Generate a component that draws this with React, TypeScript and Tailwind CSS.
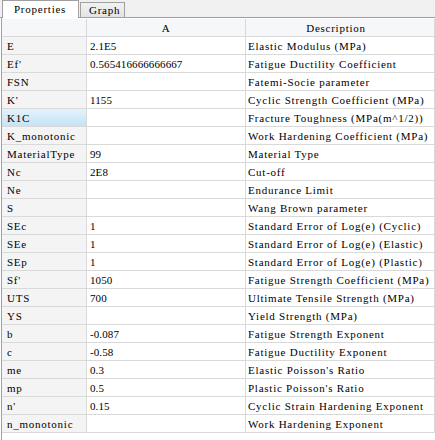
const rows: [string, string, string][] = [
  ["E", "2.1E5", "Elastic Modulus (MPa)"],
  ["Ef'", "0.565416666666667", "Fatigue Ductility Coefficient"],
  ["FSN", "", "Fatemi-Socie parameter"],
  ["K'", "1155", "Cyclic Strength Coefficient (MPa)"],
  ["K1C", "", "Fracture Toughness (MPa(m^1/2))"],
  ["K_monotonic", "", "Work Hardening Coefficient (MPa)"],
  ["MaterialType", "99", "Material Type"],
  ["Nc", "2E8", "Cut-off"],
  ["Ne", "", "Endurance Limit"],
  ["S", "", "Wang Brown parameter"],
  ["SEc", "1", "Standard Error of Log(e) (Cyclic)"],
  ["SEe", "1", "Standard Error of Log(e) (Elastic)"],
  ["SEp", "1", "Standard Error of Log(e) (Plastic)"],
  ["Sf'", "1050", "Fatigue Strength Coefficient (MPa)"],
  ["UTS", "700", "Ultimate Tensile Strength (MPa)"],
  ["YS", "", "Yield Strength (MPa)"],
  ["b", "-0.087", "Fatigue Strength Exponent"],
  ["c", "-0.58", "Fatigue Ductility Exponent"],
  ["me", "0.3", "Elastic Poisson's Ratio"],
  ["mp", "0.5", "Plastic Poisson's Ratio"],
  ["n'", "0.15", "Cyclic Strain Hardening Exponent"],
  ["n_monotonic", "", "Work Hardening Exponent"],
];

const cell = "h-[18px] leading-[18px] border-r border-b border-[#d9d9d9] whitespace-nowrap overflow-hidden";

export default function App() {
  return (
    <div
      className="w-[435px] h-[440px] overflow-hidden bg-white text-[11px] tracking-[0.75px] text-black"
      style={{ fontFamily: '"Liberation Serif", serif' }}
    >
      <div className="flex items-end h-[18px] bg-[#f0f0f0] border-b border-[#a0a0a0] pl-[2px]">
        <div className="relative top-px h-[18px] w-[77px] bg-white border border-b-0 border-[#a0a0a0] pl-[11px] leading-[16px]">
          Properties
        </div>
        <div className="h-[15px] w-[45px] ml-px bg-gradient-to-b from-[#f2f2f2] to-[#e3e3e3] border border-b-0 border-[#a0a0a0] pl-[8px] leading-[14px]">
          Graph
        </div>
      </div>
      <div className="h-[422px] ml-px border-l border-[#a0a0a0] pt-px">
        <div className="grid grid-cols-[85px_159px_1fr]">
          <div className={`${cell} bg-[#f6f7f9]`} />
          <div className={`${cell} bg-[#f6f7f9] text-center`}>A</div>
          <div className={`${cell} bg-[#f6f7f9] text-center pr-[8px]`}>Description</div>
          {rows.map(([name, value, desc]) => (
            <div key={name} className="contents">
              <div
                className={`${cell} pl-[5px] ${
                  name === "K1C"
                    ? "bg-gradient-to-b from-[#e4f3fc] to-[#c4e3f6]"
                    : "bg-[#f4f4f4]"
                }`}
              >
                {name}
              </div>
              <div className={`${cell} pl-[3px] tracking-[0.1px]`}>{value}</div>
              <div className={`${cell} pl-[2px]`}>{desc}</div>
            </div>
          ))}
        </div>
      </div>
    </div>
  );
}
